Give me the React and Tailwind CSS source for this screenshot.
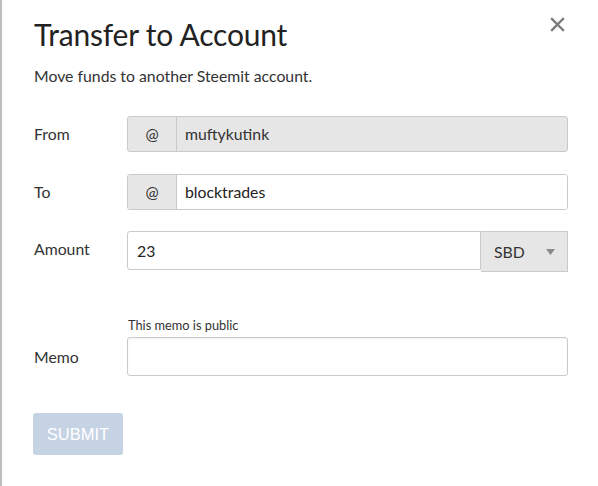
import React, { useState } from 'react';

const App = () => {
    const [to, setTo] = useState('blocktrades');
    const [amount, setAmount] = useState('23');
    const [memo, setMemo] = useState('');

    return (
        <div className="min-h-[486px] w-[598px] bg-white border-l-2 border-[#bdbdbd] relative text-[#333] font-['Lato','Open_Sans',sans-serif]">
            {/* close */}
            <button className="absolute right-[33px] top-[17px] text-[#7b7b7b]" aria-label="Close">
                <svg width="15" height="15" viewBox="0 0 15 15" fill="none" stroke="currentColor" strokeWidth="2.4" strokeLinecap="square">
                    <path d="M2 2 L13 13 M13 2 L2 13" />
                </svg>
            </button>

            <div className="pl-[31px] pr-[30px] pt-[16px]">
                <h2 className="text-[30px] leading-[36px] text-[#222] tracking-[-0.2px] ml-[1px]">Transfer to Account</h2>
                <p className="text-[15.8px] leading-[20px] mt-[14px] text-[#333] ml-[1px]">Move funds to another Steemit account.</p>

                <div className="mt-[30px] flex flex-col">
                    {/* From */}
                    <div className="flex items-center h-[36px]">
                        <label className="w-[94px] text-[15.8px] pl-[1px]">From</label>
                        <div className="flex flex-1 h-[36px] border border-[#cacaca] rounded-[3px] bg-[#e6e6e6]">
                            <span className="w-[49px] flex items-center justify-center border-r border-[#cacaca] text-[15.8px]">@</span>
                            <input
                                disabled
                                value="muftykutink"
                                className="flex-1 bg-transparent px-[8px] text-[15.8px] text-[#333] outline-none"
                            />
                        </div>
                    </div>

                    {/* To */}
                    <div className="flex items-center h-[36px] mt-[22px]">
                        <label className="w-[94px] text-[15.8px] pl-[1px]">To</label>
                        <div className="flex flex-1 h-[36px] border border-[#cacaca] rounded-[3px] overflow-hidden">
                            <span className="w-[49px] flex items-center justify-center bg-[#e6e6e6] border-r border-[#cacaca] text-[15.8px]">@</span>
                            <input
                                value={to}
                                onChange={(e) => setTo(e.target.value)}
                                className="flex-1 bg-white px-[8px] text-[15.8px] text-[#222] outline-none"
                            />
                        </div>
                    </div>

                    {/* Amount */}
                    <div className="flex items-start mt-[21px]">
                        <label className="w-[94px] text-[15.8px] leading-[36px] pl-[1px]">Amount</label>
                        <div className="flex flex-1">
                            <input
                                value={amount}
                                onChange={(e) => setAmount(e.target.value)}
                                className="flex-1 h-[39px] border border-[#cacaca] rounded-l-[3px] px-[9px] text-[15.8px] text-[#222] outline-none"
                            />
                            <div className="w-[87px] h-[41px] flex items-center justify-between bg-[#e6e6e6] border border-[#cacaca] border-l-0 pl-[13px] pr-[12px] text-[15.8px] text-[#333]">
                                <span>SBD</span>
                                <svg width="9" height="6" viewBox="0 0 9 6"><path d="M0 0 H9 L4.5 6 Z" fill="#8a8a8a" /></svg>
                            </div>
                        </div>
                    </div>

                    {/* Memo */}
                    <div className="flex mt-[46px]">
                        <div className="w-[94px]" />
                        <p className="text-[12.8px] leading-[14px] text-[#333] ml-[1px]">This memo is public</p>
                    </div>
                    <div className="flex items-center mt-[5px]">
                        <label className="w-[94px] text-[15.8px] pl-[1px]">Memo</label>
                        <input
                            value={memo}
                            onChange={(e) => setMemo(e.target.value)}
                            className="flex-1 h-[39px] border border-[#cacaca] rounded-[3px] px-[9px] text-[15.8px] outline-none shadow-[inset_0_1px_2px_rgba(0,0,0,0.05)]"
                        />
                    </div>

                    <div className="mt-[37px]">
                        <button
                            disabled
                            className="w-[90px] h-[42px] rounded-[3px] bg-[#c6d3e4] text-white text-[16.5px] font-['Liberation_Sans',Arial,sans-serif]"
                        >
                            SUBMIT
                        </button>
                    </div>
                </div>
            </div>
        </div>
    );
};

export default App;
